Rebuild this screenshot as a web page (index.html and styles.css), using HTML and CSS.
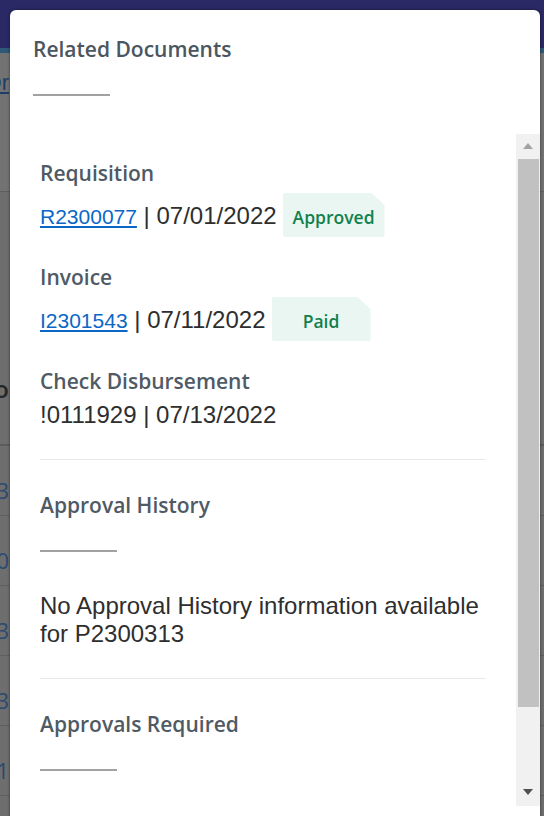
FILE: index.html
```html
<!DOCTYPE html>
<html lang="en">
<head>
<meta charset="utf-8">
<title>Related Documents</title>
<link rel="stylesheet" href="styles.css">
</head>
<body>
<div class="page">
  <div class="topbar"></div>
  <div class="band">
    <div class="edge"><a class="bg-link" href="#">Purchase Or</a></div>
  </div>
  <div class="sub">
    <div class="edge"><span class="bg-title">Info</span></div>
  </div>
  <div class="rows">
    <div class="bg-row"><div class="edge"><span class="bg-num">P2300313</span></div></div>
    <div class="bg-row"><div class="edge"><span class="bg-num">P230030</span></div></div>
    <div class="bg-row"><div class="edge"><span class="bg-num">P2300313</span></div></div>
    <div class="bg-row"><div class="edge"><span class="bg-num">P2300303</span></div></div>
    <div class="bg-row"><div class="edge"><span class="bg-num">P230031</span></div></div>
    <div class="bg-row"><div class="edge"><span class="bg-num">P2300313</span></div></div>
  </div>
</div>

<div class="modal">
  <div class="modal-head">
    <h2 class="title">Related Documents</h2>
    <div class="rule"></div>
  </div>
  <div class="modal-body">
    <div class="content">
      <div class="group">
        <div class="label">Requisition</div>
        <div class="row">
          <span class="val"><a class="doc-link" href="#">R2300077</a> | 07/01/2022</span>
          <span class="badge">Approved</span>
        </div>
      </div>
      <div class="group">
        <div class="label">Invoice</div>
        <div class="row">
          <span class="val"><a class="doc-link" href="#">I2301543</a> | 07/11/2022</span>
          <span class="badge">Paid</span>
        </div>
      </div>
      <div class="group">
        <div class="label">Check Disbursement</div>
        <div class="row row-plain">
          <span class="val">!0111929 | 07/13/2022</span>
        </div>
      </div>

      <div class="divider"></div>

      <div class="label">Approval History</div>
      <div class="rule rule-inner"></div>
      <p class="message">No Approval History information available for P2300313</p>

      <div class="divider"></div>

      <div class="label">Approvals Required</div>
      <div class="rule rule-inner"></div>
      <p class="message">No approvals are required for P2300313</p>
    </div>
    <div class="scrollbar">
      <div class="sb-btn"><i class="arrow arrow-up"></i></div>
      <div class="thumb"></div>
      <div class="sb-fill"></div>
      <div class="sb-btn"><i class="arrow arrow-down"></i></div>
    </div>
  </div>
</div>
</body>
</html>
```

FILE: styles.css
```css
html, body {
  margin: 0;
  padding: 0;
  height: 816px;
  overflow: hidden;
}

body {
  font-family: "Liberation Sans", Arial, sans-serif;
  background: #6e6e6e;
}

/* ---------- dimmed background page ---------- */
.page {
  display: flex;
  flex-direction: column;
}

.topbar {
  height: 48px;
  background: #2a2865;
  border-bottom: 5px solid #2d5877;
}

.edge {
  width: 9px;
  display: flex;
  justify-content: flex-end;
  white-space: nowrap;
}

.band {
  height: 139px;
  background: #727272;
  border-bottom: 1px solid #5e5e5e;
  padding-top: 17px;
  box-sizing: border-box;
}

.bg-link {
  font-size: 22px;
  color: #1d3d66;
  text-decoration: underline;
}

.sub {
  height: 254px;
  border-bottom: 2px solid #5c5c5c;
  box-sizing: border-box;
  padding-top: 180px;
}

.bg-title {
  font-family: "Open Sans", sans-serif;
  font-weight: 600;
  font-size: 24px;
  color: #262626;
}

.rows {
  display: flex;
  flex-direction: column;
}

.bg-row {
  height: 70px;
  box-sizing: border-box;
  border-bottom: 1px solid #5e5e5e;
  padding-top: 32px;
}

.bg-num {
  font-family: "Open Sans", sans-serif;
  font-size: 22px;
  line-height: 24px;
  color: #2c4a70;
}

/* ---------- modal ---------- */
.modal {
  position: absolute;
  left: 10px;
  top: 10px;
  width: 530px;
  height: 830px;
  background: #fff;
  border-radius: 6px 6px 0 0;
  box-shadow: 0 0 3px rgba(0, 0, 0, 0.55);
  display: flex;
  flex-direction: column;
}

.modal-head {
  padding: 24px 23px 0;
}

.title {
  margin: 0;
  font-family: "Open Sans", sans-serif;
  font-weight: 600;
  font-size: 21px;
  line-height: 30px;
  color: #4b5661;
}

.rule {
  width: 77px;
  height: 2px;
  background: #a2a2a2;
  margin-top: 30px;
}

.modal-body {
  margin-top: 38px;
  height: 672px;
  display: flex;
}

.content {
  flex: 1;
  min-width: 0;
  overflow: hidden;
  padding: 24px 30px 0;
}

.group {
  margin-bottom: 25px;
}

.group:nth-child(3) {
  margin-bottom: 0;
}

.label {
  font-family: "Open Sans", sans-serif;
  font-weight: 600;
  font-size: 21px;
  line-height: 30px;
  color: #4f5a65;
  margin-bottom: 5px;
}

.row {
  display: flex;
  align-items: baseline;
}

.row-plain {
  margin-top: 3px;
}

.val {
  font-size: 24px;
  color: #2e2e2e;
  white-space: nowrap;
}

.doc-link {
  font-size: 21px;
  color: #0b67c7;
  text-decoration: underline;
}

.badge {
  margin-left: 6px;
  min-width: 99px;
  box-sizing: border-box;
  padding: 12px 10px 8px;
  text-align: center;
  font-family: "Open Sans", sans-serif;
  font-weight: 600;
  font-size: 17.5px;
  line-height: 24px;
  color: #13804d;
  background: #e9f6f1;
  border-radius: 2px;
  clip-path: polygon(0 0, calc(100% - 13px) 0, 100% 12px, 100% 100%, 0 100%);
}

.divider {
  height: 1px;
  background: #e8e8e8;
  margin: 30px 0 30px;
}

.divider + .label {
  margin-bottom: 0;
}

.rule-inner {
  margin-top: 30px;
}

.message {
  margin: 40px 0 0;
  font-size: 24px;
  color: #2e2e2e;
}

/* ---------- scrollbar ---------- */
.scrollbar {
  width: 24px;
  background: #f1f1f1;
  display: flex;
  flex-direction: column;
}

.sb-btn {
  height: 24px;
  display: flex;
  align-items: center;
  justify-content: center;
}

.arrow {
  width: 0;
  height: 0;
  border-left: 5.5px solid transparent;
  border-right: 5.5px solid transparent;
}

.arrow-up {
  border-bottom: 6px solid #a3a3a3;
}

.arrow-down {
  border-top: 6px solid #505050;
  margin-top: -4px;
}

.thumb {
  height: 548px;
  margin: 1px 1px 0 2px;
  background: #c1c1c1;
}

.sb-fill {
  flex: 1;
}
```
